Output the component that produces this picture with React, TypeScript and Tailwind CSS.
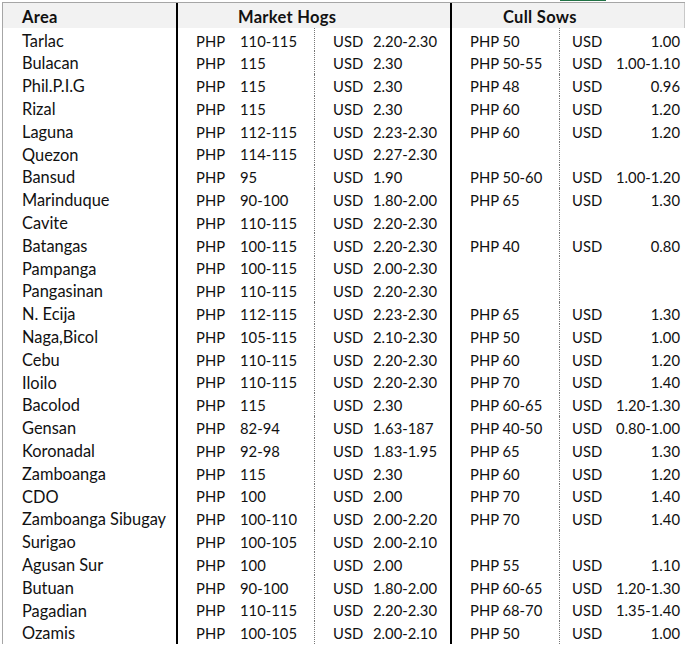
const rows: [string, string, string, string, string][] = [
  ["Tarlac", "110-115", "2.20-2.30", "50", "1.00"],
  ["Bulacan", "115", "2.30", "50-55", "1.00-1.10"],
  ["Phil.P.I.G", "115", "2.30", "48", "0.96"],
  ["Rizal", "115", "2.30", "60", "1.20"],
  ["Laguna", "112-115", "2.23-2.30", "60", "1.20"],
  ["Quezon", "114-115", "2.27-2.30", "", ""],
  ["Bansud", "95", "1.90", "50-60", "1.00-1.20"],
  ["Marinduque", "90-100", "1.80-2.00", "65", "1.30"],
  ["Cavite", "110-115", "2.20-2.30", "", ""],
  ["Batangas", "100-115", "2.20-2.30", "40", "0.80"],
  ["Pampanga", "100-115", "2.00-2.30", "", ""],
  ["Pangasinan", "110-115", "2.20-2.30", "", ""],
  ["N. Ecija", "112-115", "2.23-2.30", "65", "1.30"],
  ["Naga,Bicol", "105-115", "2.10-2.30", "50", "1.00"],
  ["Cebu", "110-115", "2.20-2.30", "60", "1.20"],
  ["Iloilo", "110-115", "2.20-2.30", "70", "1.40"],
  ["Bacolod", "115", "2.30", "60-65", "1.20-1.30"],
  ["Gensan", "82-94", "1.63-187", "40-50", "0.80-1.00"],
  ["Koronadal", "92-98", "1.83-1.95", "65", "1.30"],
  ["Zamboanga", "115", "2.30", "60", "1.20"],
  ["CDO", "100", "2.00", "70", "1.40"],
  ["Zamboanga Sibugay", "100-110", "2.00-2.20", "70", "1.40"],
  ["Surigao", "100-105", "2.00-2.10", "", ""],
  ["Agusan Sur", "100", "2.00", "55", "1.10"],
  ["Butuan", "90-100", "1.80-2.00", "60-65", "1.20-1.30"],
  ["Pagadian", "110-115", "2.20-2.30", "68-70", "1.35-1.40"],
  ["Ozamis", "100-105", "2.00-2.10", "50", "1.00"],
];

// column grid: area | thick | php | dotted | usd | thick | sow php | dotted | sow usd
const cols = "grid grid-cols-[173px_2px_136px_1px_135px_2px_107px_1px_124px]";

export default function App() {
  return (
    <div className="w-[696px] h-[648px] bg-white overflow-hidden text-[14.8px] text-[#111] font-['Lato','Open_Sans',sans-serif]">
      <div className="h-[2px] relative">
        <div className="absolute left-[560px] top-0 w-[46px] h-px bg-[#217346]" />
      </div>
      <div className="ml-[2px] border-l border-t border-[#a6a6a6] w-[683px]">
        <div className={`${cols} h-[25px] bg-[#f2f2f2] border-r border-[#c8c8c8] font-bold text-[16.5px] tracking-[0.3px]`}>
          <div className="pl-[19px] flex items-center pt-[2px]">Area</div>
          <div className="bg-black" />
          <div className="col-span-3 flex items-center pl-[60px] pt-[2px]">Market Hogs</div>
          <div className="bg-black" />
          <div className="col-span-3 flex items-center pl-[51px] pt-[2px]">Cull Sows</div>
        </div>
        {rows.map(([area, hp, hu, sp, su]) => (
          <div key={area} className={`${cols} h-[22.8px] leading-none`}>
            <div className="pl-[19px] flex items-center pt-[3px] text-[16.4px]">{area}</div>
            <div className="bg-black" />
            <div className="flex items-center pl-[18px] pt-[3px]">
              <span className="w-[44px]">PHP</span>
              <span>{hp}</span>
            </div>
            <div className="border-l border-dotted border-[#777]" />
            <div className="flex items-center pl-[18px] pt-[3px]">
              <span className="w-[40px]">USD</span>
              <span>{hu}</span>
            </div>
            <div className="bg-black" />
            <div className="flex items-center pl-[18px] pt-[3px]">{sp && `PHP ${sp}`}</div>
            <div className="border-l border-dotted border-[#777]" />
            <div className="flex items-center pl-[12px] pr-[4px] pt-[3px]">
              {su && (
                <>
                  <span>USD</span>
                  <span className="ml-auto">{su}</span>
                </>
              )}
            </div>
          </div>
        ))}
      </div>
    </div>
  );
}
